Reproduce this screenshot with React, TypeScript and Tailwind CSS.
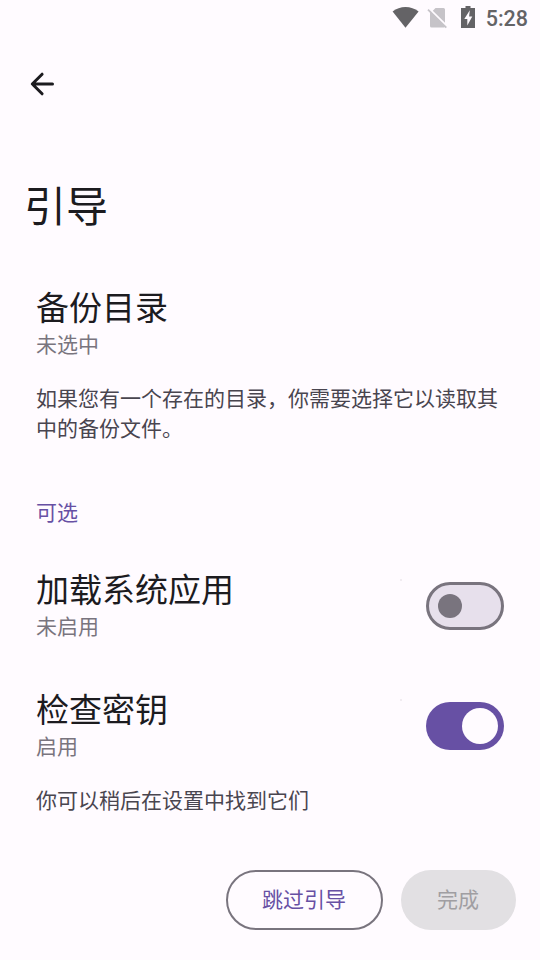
import { clsx } from "clsx";

function StatusBar() {
    return (
        <div className="h-9 flex items-center justify-end pr-3 text-[#646366]">
            <svg className="mr-2 w-[27px] h-9" viewBox="392 0 27 36" fill="currentColor">
                <path d="M405.5 27.8 392.6 11.5C396.3 8.6 400.7 7 405.5 7s9.4 1.6 13.1 4.5z" />
            </svg>
            <svg className="w-[21px] h-9" viewBox="427 0 21 36">
                <path d="M435.5 8H443.5A1.5 1.5 0 0 1 445 9.5V22.8L432.8 10.700zM430 11.600 445 26.500 444.200 27.500H431.500A1.500 1.500 0 0 1 430 26z" fill="#c6c3c8" />
                <path d="M428 9.600 446.300 27.600" stroke="#c6c3c8" strokeWidth="1.800" />
            </svg>
            <svg className="ml-3 w-[17px] h-9" viewBox="460 0 17 36" fill="currentColor">
                <path fillRule="evenodd" d="M465.500 6h5v2h4.500v20h-14V8h4.500zM469.800 10.300 464.300 19h3v6.500l5-9h-3.200z" />
            </svg>
            <span className="ml-[9px] pt-0.5 text-[21.5px] font-medium leading-none">5:28</span>
        </div>
    );
}

function Switch({ checked }: { checked: boolean }) {
    return (
        <button
            role="switch"
            aria-checked={checked}
            className={clsx(
                "w-[78px] h-12 rounded-full flex items-center shrink-0",
                checked ? "bg-[#6750a4] justify-end pr-1.5" : "bg-[#e7e0ec] border-3 border-[#79747e] pl-[9px]"
            )}
        >
            <span className={clsx("rounded-full", checked ? "size-9 bg-[#fffbff]" : "size-6 bg-[#79747e]")} />
        </button>
    );
}

function Preference({ title, summary, checked }: { title: string; summary: string; checked?: boolean }) {
    return (
        <div className="h-[72px] flex items-center">
            <div className="flex-1">
                <h2 className="text-[33px] leading-[42px] text-[#1c1b1f]">{title}</h2>
                <p className="text-[21px] leading-[30px] text-[#79747e]">{summary}</p>
            </div>
            {checked !== undefined && (
                <>
                    <span className="self-start mt-[9px] mr-6 w-0.5 h-0.5 bg-[#f1ecf1]" />
                    <Switch checked={checked} />
                </>
            )}
        </div>
    );
}

export default function App() {
    return (
        <div className="w-[540px] h-[960px] bg-[#fffbff] flex flex-col overflow-hidden font-[Roboto,'Noto_Sans_CJK_SC',sans-serif]">
            <StatusBar />

            <header className="h-24 px-6 flex items-center">
                <button aria-label="Back">
                    <svg
                        className="size-9"
                        viewBox="0 0 36 36"
                        fill="none"
                        stroke="#1c1b1f"
                        strokeWidth="3"
                        strokeLinecap="round"
                        strokeLinejoin="round"
                    >
                        <path d="M28.500 18H8.500M18.100 8.200 8.300 18l9.800 9.800" />
                    </svg>
                </button>
            </header>

            <h1 className="mt-[46px] pl-6 text-[42px] leading-[60px] text-[#1c1b1f]">引导</h1>

            <main className="flex-1 px-9 pt-[50px]">
                <Preference title="备份目录" summary="未选中" />
                <p className="mt-6 text-[21px] leading-[30px] text-[#49454f]">
                    如果您有一个存在的目录，你需要选择它以读取其中的备份文件。
                </p>
                <h3 className="mt-[54px] text-[21px] leading-[30px] text-[#6750a4]">可选</h3>
                <div className="mt-[42px] flex flex-col gap-12">
                    <Preference title="加载系统应用" summary="未启用" checked={false} />
                    <Preference title="检查密钥" summary="启用" checked />
                </div>
                <p className="mt-6 text-[21px] leading-[30px] text-[#49454f]">你可以稍后在设置中找到它们</p>
            </main>

            <footer className="pr-6 pb-[30px] flex justify-end gap-[18px] text-[21px]">
                <button className="w-[157px] h-[60px] pt-0.5 pr-px rounded-full border-2 border-[#79747e] text-[#6750a4]">跳过引导</button>
                <button className="w-[115px] h-[60px] pt-0.5 pr-px rounded-full bg-[#e2e0e3] text-[#a09ea2]">完成</button>
            </footer>
        </div>
    );
}
